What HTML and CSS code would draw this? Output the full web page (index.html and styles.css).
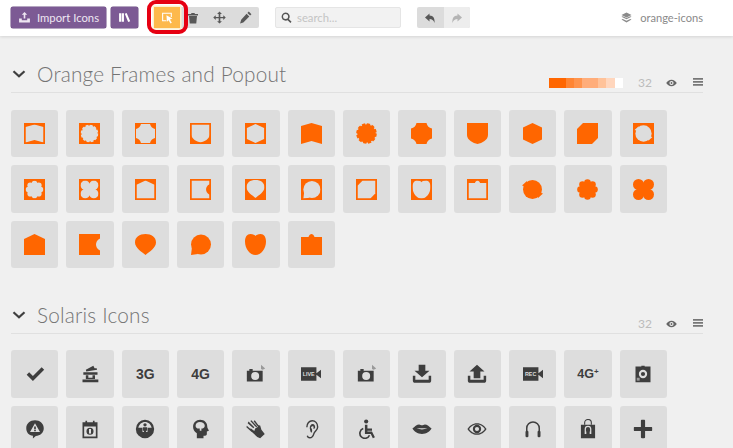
FILE: index.html
```html
<!DOCTYPE html>
<html lang="en">
<head>
<meta charset="utf-8">
<title>IcoMoon App</title>
<link rel="stylesheet" href="styles.css">
</head>
<body>
<svg class="defs" aria-hidden="true">
  <symbol id="banner" viewBox="0 0 21 21"><path d="M0 3 10.500 0 21 3V21L10.500 18 0 21Z"/></symbol>
  <symbol id="scallop" viewBox="0 0 21 21"><circle cx="10.500" cy="10.500" r="9.300" stroke="currentColor" stroke-width="2" stroke-dasharray="3.300 1.570"/></symbol>
  <symbol id="octagon" viewBox="0 0 21 21"><path d="M5.500 0H15.500Q16.500 4.500 21 5.500V15.500Q16.500 16.500 15.500 21H5.500Q4.500 16.500 0 15.500V5.500Q4.500 4.500 5.500 0Z"/></symbol>
  <symbol id="shield" viewBox="0 0 21 21"><path d="M0 0H21V12C21 17 15 20 10.500 21 6 20 0 17 0 12Z"/></symbol>
  <symbol id="hexagon" viewBox="0 0 21 21"><path d="M10.500 0 20 4.500V16.500L10.500 21 1 16.500V4.500Z"/></symbol>
  <symbol id="cut" viewBox="0 0 21 21"><path d="M6 0H21V15L15 21H0V6Z"/></symbol>
  <symbol id="swirl" viewBox="0 0 21 21"><circle cx="10.500" cy="10.500" r="9.500"/><path d="M0 6.500 5 2 5 8ZM21 14.500 16 19 16 13Z"/></symbol>
  <symbol id="flower" viewBox="0 0 21 21"><circle cx="10.500" cy="10.500" r="7"/><circle cx="10.500" cy="3.500" r="3.300"/><circle cx="10.500" cy="17.500" r="3.300"/><circle cx="3.500" cy="10.500" r="3.300"/><circle cx="17.500" cy="10.500" r="3.300"/><circle cx="5.500" cy="5.500" r="3.300"/><circle cx="15.500" cy="5.500" r="3.300"/><circle cx="5.500" cy="15.500" r="3.300"/><circle cx="15.500" cy="15.500" r="3.300"/></symbol>
  <symbol id="clover" viewBox="0 0 21 21"><circle cx="5.500" cy="5.500" r="5.500"/><circle cx="15.500" cy="5.500" r="5.500"/><circle cx="5.500" cy="15.500" r="5.500"/><circle cx="15.500" cy="15.500" r="5.500"/><rect x="4" y="4" width="13" height="13"/></symbol>
  <symbol id="house" viewBox="0 0 21 21"><path d="M10.500 0 21 5V21H0V5Z"/></symbol>
  <symbol id="notch" viewBox="0 0 21 21"><path d="M0 0H21V4.500C18 6 17 8.500 17 10.500S18 15 21 16.500V21H0Z"/></symbol>
  <symbol id="drop" viewBox="0 0 21 21"><path d="M10.500 21C7 18 0 14 0 8.500 0 3 4.500 0 10.500 0S21 3 21 8.500C21 14 14 18 10.500 21Z"/></symbol>
  <symbol id="bubble" viewBox="0 0 21 21"><circle cx="11" cy="10.500" r="10"/><path d="M1 21 2 13 8 20Z"/></symbol>
  <symbol id="heart" viewBox="0 0 21 21"><path d="M10.500 21C5 21 0 15 0 7.500 0 3 2 0 5.500 0 8 0 10 1 10.500 2 11 1 13 0 15.500 0 19 0 21 3 21 7.500 21 15 16 21 10.500 21Z"/></symbol>
  <symbol id="tab" viewBox="0 0 21 21"><path d="M0 3H7.500C8 1 9.500 0 10.500 0S13 1 13.500 3H21V21H0Z"/></symbol>

  <symbol id="i-upload" viewBox="0 0 24 24"><path d="M12 2l5 5h-3.500v7h-3V7H7zM2 14h5v3h10v-3h5v7H2z"/></symbol>
  <symbol id="i-library" viewBox="0 0 24 24"><path d="M2 4h4v16H2zM7 4h4v16H7zM12.500 5l3.500-1.500 6.500 15.500-3.700 1.500z"/></symbol>
  <symbol id="i-select" viewBox="0 0 24 24"><path d="M2 3h18v8h-2V5H4v12h6v2H2z"/><path d="M10 8l11 6-4.500 1.500 3.500 6-2.500 1.500-3.500-6L11 20z"/></symbol>
  <symbol id="i-trash" viewBox="0 0 24 24"><path d="M9 2h6l1 2h6v3H2V4h6zM4 8h16l-1.500 15h-13z"/></symbol>
  <symbol id="i-move" viewBox="0 0 24 24"><path d="M12 1l4.500 4.500h-3V11h5.500V8l4.500 4-4.500 4.500v-3h-5.500V19h3L12 23l-4.500-4h3v-5.500H5v3L.500 12 5 8v3h5.500V5.500h-3z"/></symbol>
  <symbol id="i-pencil" viewBox="0 0 24 24"><path d="M18 1l5 5-2.500 2.500-5-5zM14 5l5 5L8 21l-6 2 2-7z"/></symbol>
  <symbol id="i-undo" viewBox="0 0 24 24"><path d="M11 3 2 11l9 8v-5c5 0 8 2 10 8 1-9-2-15-10-15z"/></symbol>
  <symbol id="i-redo" viewBox="0 0 24 24"><path d="M13 3l9 8-9 8v-5c-5 0-8 2-10 8-1-9 2-15 10-15z"/></symbol>
  <symbol id="i-layers" viewBox="0 0 24 24"><path d="M12 1 23 6.500 12 12 1 6.500zM1 10.500l3-1.500 8 4 8-4 3 1.500L12 16zM1 16.500 4 15l8 4 8-4 3 1.500L12 23z"/></symbol>
  <symbol id="i-search" viewBox="0 0 24 24"><path fill-rule="evenodd" d="M10 1a9 9 0 0 1 7 14.500l6 6-2.500 2.500-6-6A9 9 0 1 1 10 1zm0 3.500a5.500 5.500 0 1 0 0 11 5.500 5.500 0 0 0 0-11z"/></symbol>
  <symbol id="i-chev" viewBox="0 0 14 8"><path d="M1.500 1.200 7 6.300 12.500 1.200" fill="none" stroke="currentColor" stroke-width="2.200"/></symbol>
  <symbol id="i-eye" viewBox="0 0 24 16"><path fill-rule="evenodd" d="M12 1c5 0 9 3 11.500 7C21 12 17 15 12 15S3 12 .500 8C3 4 7 1 12 1zm0 2.500a4.500 4.500 0 1 0 0 9 4.500 4.500 0 0 0 0-9zM12 6a2 2 0 1 1 0 4 2 2 0 0 1 0-4z"/></symbol>
  <symbol id="i-menu" viewBox="0 0 20 16"><path d="M0 0h20v3.500H0zM0 6h20v3.500H0zM0 12h20v3.500H0z"/></symbol>

  <symbol id="s-check" viewBox="0 0 24 24"><path d="M2 13l3-3 4.500 4.500L20 4l3 3-13.500 13.500z"/></symbol>
  <symbol id="s-booth" viewBox="0 0 24 24"><path d="M7 7 16 2l1.500 3L20 5l.500 2-13 2zM4 10h17v3H4zM7 13.500h3v3h5v-3h3V18H7zM3 18.500h19V22H3z"/></symbol>
  <symbol id="s-cam" viewBox="0 0 24 24"><path fill-rule="evenodd" d="M1 8h3V6h4v2h12v13H1zm10 1.500a4.800 4.800 0 1 0 0 9.600 4.800 4.800 0 0 0 0-9.600z"/><path class="soft" d="M18 1l5 4.500-3 1.500-2-1z"/></symbol>
  <symbol id="s-down" viewBox="0 0 24 24"><path d="M8 1h8v7h5l-9 8-9-8h5zM1 14h3v5h16v-5h3v6c0 1.500-1 2.500-2.500 2.500h-17C2 22.500 1 21.500 1 20z"/></symbol>
  <symbol id="s-up" viewBox="0 0 24 24"><path d="M12 1l9 8h-5v8H8V9H3zM1 14h3v5h16v-5h3v6c0 1.500-1 2.500-2.500 2.500h-17C2 22.500 1 21.500 1 20z"/></symbol>
  <symbol id="s-lens" viewBox="0 0 24 24"><path fill-rule="evenodd" d="M3 3h7V2h4v1h7v19H3zm9 4a5 5 0 1 0 0 10 5 5 0 0 0 0-10zm0 2.500a2.500 2.500 0 1 1 0 5 2.500 2.500 0 0 1 0-5z"/><rect class="soft" x="4.500" y="16.500" width="3.500" height="3.500"/></symbol>
  <symbol id="s-alert" viewBox="0 0 24 24"><path fill-rule="evenodd" d="M12 1.500c6 0 10.500 4 10.500 9.500S18 20 13 20.300L9.500 23.500 9.500 20.200C4.500 19.500 1.500 16 1.500 11 1.500 5.500 6 1.500 12 1.500zM12 5 6 15.500h12z"/><rect x="11" y="9" width="2" height="3.500"/><rect x="11" y="13.200" width="2" height="1.500"/></symbol>
  <symbol id="s-cal" viewBox="0 0 24 24"><path fill-rule="evenodd" d="M3 4h3.500V2h2v2h7V2h2v2H21v19H3zm2 5v12h14V9zm7 1.500a4 4 0 1 1 0 8.500 4 4 0 0 1 0-8.500z"/><rect class="light" x="11" y="12" width="2" height="5.500"/></symbol>
  <symbol id="s-person" viewBox="0 0 24 24"><path fill-rule="evenodd" d="M12 1a11 11 0 1 1 0 22 11 11 0 0 1 0-22zm0 2.500c-4 0-7.200 2.800-8 7h5v5h6v-5h5c-.8-4.200-4-7-8-7z"/><circle cx="12" cy="7" r="2"/><path d="M9.500 10h5v4h-1.200v6h-2.600v-6H9.500z"/></symbol>
  <symbol id="s-head" viewBox="0 0 24 24"><path fill-rule="evenodd" d="M11 1c5 0 8.500 3.500 8.500 8 0 2 1.500 3.500 2 5l-2.500 1v3c0 1.500-1 2-2 2h-2v3H7v-6C4 15 2.500 12.500 2.500 9.500 2.500 4.500 6 1 11 1zm-.500 2.500c-2.800 0-5 2-5 4.500 0 2 1.500 3.500 3.500 3.500h1.500V14h2v-2.500c2.500 0 4-1.500 4-3.500 0-2.500-2.500-4.500-6-4.500z"/></symbol>
  <symbol id="s-hand" viewBox="0 0 24 24"><path d="M3 3l7 7-1.200 1.200L2 5zM6.500 1.500l7 7.500-1.300 1-7-7.500zM10.500 1.500l6 8-1.400.8-6-7.500zM1 8l7 6.500-1.200 1.200L.500 10zM15 7.500l2 .2 1.500 5.300 4 5-5.500 5-3.500-1.500-7-6.500-2-3 1.500-.5 4 3 1-3 3-2z"/></symbol>
  <symbol id="s-ear" viewBox="0 0 24 24"><path d="M7 10c0-5 3-8 6.500-8S20 5 20 9.500c0 4-3.500 5-4.500 8-1 3.500-3 5-5 5-1.500 0-2.500-1-3-2.500" fill="none" stroke="currentColor" stroke-width="1.700"/><path d="M10.500 11c0-3 1.500-5 3.500-5s3 2 3 4c0 1.500-1 2-2 2v-2c.500-1.500-2-2.500-3 .500 1.500 1 2 4 .500 6-1-.500-1.500-3-2-5.500z"/></symbol>
  <symbol id="s-wheel" viewBox="0 0 24 24"><circle cx="11" cy="3" r="2.500"/><path d="M9.500 7h3v4.500H18v2.500h-5.500v1H18l3.500 7-2.500 1L16.500 18H9.500z"/><path d="M7.500 11.500a6 6 0 1 0 7.500 8" fill="none" stroke="currentColor" stroke-width="2"/></symbol>
  <symbol id="s-lips" viewBox="0 0 24 24"><path fill-rule="evenodd" d="M.500 11.500C3 9 6 6.500 8.500 6.500c1.500 0 2.500 1 3.500 1s2-1 3.500-1c2.500 0 5.500 2.500 8 5-2 3.500-6 6.500-11.500 6.500S2.500 15 .500 11.500zM5.500 11.500c2 .5 4.500 1 6.500 1s4.500-.5 6.500-1c-2 -.3-4.500-.3-6.500-.3s-4.500 0-6.500.3z"/></symbol>
  <symbol id="s-eye" viewBox="0 0 24 24"><path fill-rule="evenodd" d="M12 5c5 0 9 3 11.500 7C21 16 17 19 12 19S3 16 .500 12C3 8 7 5 12 5zM12 6.500c-4 0-7.500 2.500-9.500 5.500 2 3 5.500 5.500 9.500 5.500s7.500-2.500 9.500-5.500c-2-3-5.500-5.500-9.500-5.500zm0 .5a5 5 0 1 1 0 10 5 5 0 0 1 0-10zm0 2.500a2.500 2.500 0 1 0 0 5 2.500 2.500 0 0 0 0-5z"/></symbol>
  <symbol id="s-phones" viewBox="0 0 24 24"><path d="M4.500 16v-5a7.500 7.500 0 0 1 15 0v5" fill="none" stroke="currentColor" stroke-width="1.800"/><rect x="3" y="14" width="3.500" height="8" rx="1.500"/><rect x="17.500" y="14" width="3.500" height="8" rx="1.500"/></symbol>
  <symbol id="s-bag" viewBox="0 0 24 24"><path d="M8 7V4.500a4 4 0 0 1 8 0V7" fill="none" stroke="currentColor" stroke-width="1.300"/><path fill-rule="evenodd" d="M3.500 7h17v16h-17zm4.500 5v6h2v-3H9.500v-3a2.500 2.500 0 0 1 5 0v3H14v3h2v-6a4 4 0 0 0-8 0z"/></symbol>
  <symbol id="s-plus" viewBox="0 0 24 24"><path d="M9.500 2c0-.8.700-1 1-1h3c.3 0 1 .2 1 1v7.500H22c.8 0 1 .7 1 1v3c0 .3-.2 1-1 1h-7.500V22c0 .8-.7 1-1 1h-3c-.3 0-1-.2-1-1v-7.500H2c-.8 0-1-.7-1-1v-3c0-.3.200-1 1-1h7.500z"/></symbol>
  <symbol id="s-video" viewBox="0 0 24 24"><path d="M0 4h18.500v16H0zM18.500 11l5.500-4v10l-5.500-4z"/></symbol>
</svg>

<header class="topbar">
  <button class="btn btn-primary"><svg class="ic ic-13"><use href="#i-upload"/></svg><span>Import Icons</span></button>
  <button class="btn btn-primary btn-square"><svg class="ic ic-13"><use href="#i-library"/></svg></button>
  <div class="group group-tools">
    <button class="seg seg-active"><svg class="ic ic-13"><use href="#i-select"/></svg></button>
    <button class="seg"><svg class="ic ic-12"><use href="#i-trash"/></svg></button>
    <button class="seg"><svg class="ic ic-13"><use href="#i-move"/></svg></button>
    <button class="seg"><svg class="ic ic-13"><use href="#i-pencil"/></svg></button>
    <span class="callout"></span>
  </div>
  <div class="search"><svg class="ic ic-11"><use href="#i-search"/></svg><span>search...</span></div>
  <div class="group group-history">
    <button class="seg"><svg class="ic ic-12"><use href="#i-undo"/></svg></button>
    <button class="seg seg-muted"><svg class="ic ic-12"><use href="#i-redo"/></svg></button>
  </div>
  <div class="project"><svg class="ic ic-11"><use href="#i-layers"/></svg><span>orange-icons</span></div>
</header>

<main class="content">
  <section class="set">
    <div class="set-head">
      <svg class="chev"><use href="#i-chev"/></svg>
      <h2>Orange Frames and Popout</h2>
      <div class="palette"><i class="c1"></i><i class="c2"></i><i class="c3"></i><i class="c4"></i><i class="c5"></i><i class="c6"></i><i class="c7"></i></div>
      <span class="count">32</span>
      <svg class="eye"><use href="#i-eye"/></svg>
      <svg class="menu"><use href="#i-menu"/></svg>
    </div>
    <div class="grid orange">
      <div class="tile"><svg class="sh"><rect class="fr" width="21" height="21"/><use class="cut" href="#banner" x="1.500" y="1.500" width="18" height="18"/></svg></div>
      <div class="tile"><svg class="sh"><rect class="fr" width="21" height="21"/><use class="cut" href="#scallop" x="1.500" y="1.500" width="18" height="18"/></svg></div>
      <div class="tile"><svg class="sh"><rect class="fr" width="21" height="21"/><use class="cut" href="#octagon" x="1" y="1" width="19" height="19"/></svg></div>
      <div class="tile"><svg class="sh"><rect class="fr" width="21" height="21"/><use class="cut" href="#shield" x="1.500" y="1.500" width="18" height="18"/></svg></div>
      <div class="tile"><svg class="sh"><rect class="fr" width="21" height="21"/><use class="cut" href="#hexagon" x="1" y="1" width="19" height="19"/></svg></div>
      <div class="tile"><svg class="sh"><use href="#banner" width="21" height="21"/></svg></div>
      <div class="tile"><svg class="sh"><use href="#scallop" width="21" height="21"/></svg></div>
      <div class="tile"><svg class="sh"><use href="#octagon" width="21" height="21"/></svg></div>
      <div class="tile"><svg class="sh"><use href="#shield" width="21" height="21"/></svg></div>
      <div class="tile"><svg class="sh"><use href="#hexagon" width="21" height="21"/></svg></div>
      <div class="tile"><svg class="sh"><use href="#cut" width="21" height="21"/></svg></div>
      <div class="tile"><svg class="sh"><rect class="fr" width="21" height="21"/><use class="cut" href="#swirl" x="1.500" y="1.500" width="18" height="18"/></svg></div>

      <div class="tile"><svg class="sh"><rect class="fr" width="21" height="21"/><use class="cut" href="#flower" x="1.500" y="1.500" width="18" height="18"/></svg></div>
      <div class="tile"><svg class="sh"><rect class="fr" width="21" height="21"/><use class="cut" href="#clover" x="1.500" y="1.500" width="18" height="18"/></svg></div>
      <div class="tile"><svg class="sh"><rect class="fr" width="21" height="21"/><use class="cut" href="#house" x="1.500" y="1.500" width="18" height="18"/></svg></div>
      <div class="tile"><svg class="sh"><rect class="fr" width="21" height="21"/><use class="cut" href="#notch" x="1.500" y="1.500" width="18" height="18"/></svg></div>
      <div class="tile"><svg class="sh"><rect class="fr" width="21" height="21"/><use class="cut" href="#drop" x="1.500" y="1" width="18" height="18"/></svg></div>
      <div class="tile"><svg class="sh"><rect class="fr" width="21" height="21"/><use class="cut" href="#bubble" x="1.500" y="1.500" width="18" height="18"/></svg></div>
      <div class="tile"><svg class="sh"><rect class="fr" width="21" height="21"/><use class="cut" href="#cut" x="1.500" y="1.500" width="18" height="18"/></svg></div>
      <div class="tile"><svg class="sh"><rect class="fr" width="21" height="21"/><use class="cut" href="#heart" x="1.500" y="1.500" width="18" height="18"/></svg></div>
      <div class="tile"><svg class="sh"><rect class="fr" width="21" height="21"/><use class="cut" href="#tab" x="1.500" y="1.500" width="18" height="18"/></svg></div>
      <div class="tile"><svg class="sh"><use href="#swirl" width="21" height="21"/></svg></div>
      <div class="tile"><svg class="sh"><use href="#flower" width="21" height="21"/></svg></div>
      <div class="tile"><svg class="sh"><use href="#clover" width="21" height="21"/></svg></div>

      <div class="tile"><svg class="sh"><use href="#house" width="21" height="21"/></svg></div>
      <div class="tile"><svg class="sh"><use href="#notch" width="21" height="21"/></svg></div>
      <div class="tile"><svg class="sh"><use href="#drop" width="21" height="21"/></svg></div>
      <div class="tile"><svg class="sh"><use href="#bubble" width="21" height="21"/></svg></div>
      <div class="tile"><svg class="sh"><use href="#heart" width="21" height="21"/></svg></div>
      <div class="tile"><svg class="sh"><use href="#tab" width="21" height="21"/></svg></div>
    </div>
  </section>

  <section class="set set-next">
    <div class="set-head">
      <svg class="chev"><use href="#i-chev"/></svg>
      <h2>Solaris Icons</h2>
      <span class="count count-push">32</span>
      <svg class="eye"><use href="#i-eye"/></svg>
      <svg class="menu"><use href="#i-menu"/></svg>
    </div>
    <div class="grid solaris">
      <div class="tile"><svg class="gl"><use href="#s-check"/></svg></div>
      <div class="tile"><svg class="gl"><use href="#s-booth"/></svg></div>
      <div class="tile"><span class="gtext">3G</span></div>
      <div class="tile"><span class="gtext">4G</span></div>
      <div class="tile"><svg class="gl"><use href="#s-cam"/></svg></div>
      <div class="tile"><svg class="gl" viewBox="0 0 24 24"><use href="#s-video"/><text class="vt" x="9.200" y="14.300">LIVE</text></svg></div>
      <div class="tile"><svg class="gl"><use href="#s-cam"/></svg></div>
      <div class="tile"><svg class="gl"><use href="#s-down"/></svg></div>
      <div class="tile"><svg class="gl"><use href="#s-up"/></svg></div>
      <div class="tile"><svg class="gl" viewBox="0 0 24 24"><use href="#s-video"/><text class="vt" x="9.200" y="14.300">REC</text></svg></div>
      <div class="tile"><span class="gtext gtext-sm">4G<sup>+</sup></span></div>
      <div class="tile"><svg class="gl"><use href="#s-lens"/></svg></div>

      <div class="tile"><svg class="gl"><use href="#s-alert"/></svg></div>
      <div class="tile"><svg class="gl"><use href="#s-cal"/></svg></div>
      <div class="tile"><svg class="gl"><use href="#s-person"/></svg></div>
      <div class="tile"><svg class="gl"><use href="#s-head"/></svg></div>
      <div class="tile"><svg class="gl"><use href="#s-hand"/></svg></div>
      <div class="tile"><svg class="gl"><use href="#s-ear"/></svg></div>
      <div class="tile"><svg class="gl"><use href="#s-wheel"/></svg></div>
      <div class="tile"><svg class="gl"><use href="#s-lips"/></svg></div>
      <div class="tile"><svg class="gl"><use href="#s-eye"/></svg></div>
      <div class="tile"><svg class="gl"><use href="#s-phones"/></svg></div>
      <div class="tile"><svg class="gl"><use href="#s-bag"/></svg></div>
      <div class="tile"><svg class="gl"><use href="#s-plus"/></svg></div>
    </div>
  </section>
</main>
</body>
</html>
```

FILE: styles.css
```css
* { box-sizing: border-box; }
html, body { margin: 0; height: 100%; overflow: hidden; }
body { background: #f0f0f0; font-family: Lato, "Liberation Sans", sans-serif; color: #444; }
.defs { display: none; }
button { border: 0; padding: 0; margin: 0; font: inherit; cursor: pointer; }
.ic { fill: currentColor; display: block; flex: none; }
.ic-11 { width: 11px; height: 11px; }
.ic-12 { width: 12px; height: 12px; }
.ic-13 { width: 13px; height: 13px; }

.topbar { height: 36px; background: #fff; box-shadow: 0 1px 3px rgba(0, 0, 0, .12); display: flex; align-items: center; padding: 0 30px 1px 11px; }
.btn { height: 21px; display: flex; align-items: center; border-radius: 2px; }
.btn-primary { background: #7c5a94; color: #eee6f2; width: 95px; padding-left: 7px; gap: 6px; font-size: 11.300px; white-space: nowrap; margin-right: 5px; box-shadow: 0 0 0 .5px #6d4e83; }
.btn-square { width: 27px; padding-left: 7px; margin-right: 16px; color: #fff; }

.group { height: 21px; display: flex; border-radius: 2px; background: #dcdcdc; position: relative; }
.group-tools { width: 105px; margin-right: 16px; }
.group-history { width: 53px; margin-right: auto; }
.seg { flex: 1; background: transparent; color: #585858; display: flex; align-items: center; justify-content: center; }
.seg-active { background: #fdb94c; color: #fff; box-shadow: 0 0 0 1.500px #fdf0cf; }
.seg-muted { background: #ededed; color: #b4b4b4; border-radius: 0 2px 2px 0; }
.callout { position: absolute; left: -7px; top: -7px; width: 41px; height: 34px; border: 4px solid #e60012; border-radius: 9px; pointer-events: none; }

.search { width: 126px; height: 21px; margin-right: 16px; background: #f2f2f2; border: 1px solid #e5e5e5; border-radius: 2px; display: flex; align-items: center; gap: 5px; padding-left: 5px; color: #555; font-size: 11.300px; }
.search span { color: #c4c4c4; }
.project { display: flex; align-items: center; gap: 8px; color: #8a8a8a; font-size: 11.100px; }

.content { padding: 0 30px 0 11px; }
.set { padding-top: 27px; }
.set-next { padding-top: 36px; }
.set-head { height: 30px; display: flex; align-items: flex-end; border-bottom: 1px solid #e0e0e0; margin-bottom: 17px; }
.set-next .set-head { margin-bottom: 16px; }
.chev { width: 14px; height: 8px; color: #3f3f3f; margin: 0 11px 14px 1px; flex: none; }
.set-head h2 { margin: 0 0 3px; font-size: 20.750px; font-weight: 300; color: #747474; line-height: 30px; letter-spacing: .2px; white-space: nowrap; }
.palette { margin-left: auto; display: flex; height: 10px; margin-bottom: 4px; }
.palette i { display: block; }
.c1 { width: 17px; background: #ff6600; }
.c2 { width: 8px; background: #ff8533; }
.c3 { width: 8px; background: #ff944d; }
.c4 { width: 16px; background: #ffad7a; }
.c5 { width: 8px; background: #ffc299; }
.c6 { width: 9px; background: #ffd6bd; }
.c7 { width: 8px; background: #fff; }
.count { width: 12px; margin: 0 16px 0 15px; font-size: 12px; color: #bcbcbc; line-height: 16px; padding-bottom: 1px; white-space: nowrap; }
.count-push { margin-left: auto; }
.eye { width: 11px; height: 8px; fill: #666; margin: 0 16px 5px 0; flex: none; }
.menu { width: 10px; height: 8px; fill: #777; margin-bottom: 6px; flex: none; }

.grid { display: grid; grid-template-columns: repeat(12, 47.330px); grid-auto-rows: 47.330px; gap: 8.100px 8px; }
.tile { background: #dddddd; border-radius: 3px; display: flex; align-items: center; justify-content: center; }
.sh { width: 21px; height: 21px; fill: #ff6600; color: #ff6600; overflow: visible; }
.fr { fill: #ff6600; }
.cut { fill: #dddddd; color: #dddddd; }
.gl { width: 20px; height: 20px; fill: #3e3e3e; color: #3e3e3e; overflow: visible; }
.soft { fill: #999; }
.light { fill: #fff; }
.vt { font: bold 6.500px "Liberation Sans", sans-serif; fill: #ddd; text-anchor: middle; }
.gtext { font: bold 14px "Liberation Sans", sans-serif; color: #3e3e3e; }
.gtext-sm { font-size: 12.500px; }
.gtext sup { font-size: 8px; line-height: 0; vertical-align: 4px; }
```
